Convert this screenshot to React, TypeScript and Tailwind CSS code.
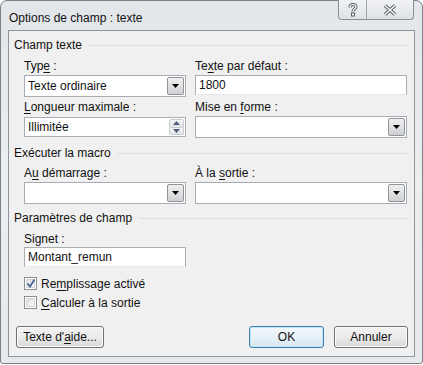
import React from "react"

const font = { fontFamily: '"Liberation Sans", Arial, sans-serif' }

function Key({ children }: { children: React.ReactNode }) {
  return <span className="underline underline-offset-[2px] decoration-[1px]">{children}</span>
}

function GroupHeader({ label, className = "" }: { label: string; className?: string }) {
  return (
    <div className={`flex items-center h-[14px] ${className}`}>
      <span className="whitespace-nowrap">{label}</span>
      <div className="flex-1 ml-[7px] border-t border-[#d5dfe5]" />
    </div>
  )
}

function Arrow() {
  return (
    <svg width="7" height="4" viewBox="0 0 7 4">
      <path d="M0 0H7L3.5 4Z" fill="#000" />
    </svg>
  )
}

function Select({ value = "" }: { value?: string }) {
  return (
    <div className="flex h-[22px] border border-[#a5acb5] bg-white">
      <div className="flex-1 flex items-center pl-[3px] truncate">{value}</div>
      <div className="w-[17px] m-[1px] ml-0 border border-[#8f949a] rounded-[2px] bg-gradient-to-b from-[#f0f0f0] to-[#cfd0d2] flex items-center justify-center">
        <Arrow />
      </div>
    </div>
  )
}

function TextInput({ value = "" }: { value?: string }) {
  return (
    <div className="h-[20px] border border-[#abadb3] border-b-[#e3e9ef] bg-white flex items-center pl-[3px]">
      {value}
    </div>
  )
}

function Spin({ value }: { value: string }) {
  return (
    <div className="flex h-[20px] border border-[#abadb3] bg-white">
      <div className="flex-1 flex items-center pl-[3px]">{value}</div>
      <div className="w-[15px] flex flex-col my-[1px] mr-[1px]">
        <div className="flex-1 border border-[#c8ccd2] rounded-t-[2px] bg-gradient-to-b from-[#f4f4f4] to-[#e3e4e6] flex items-center justify-center">
          <svg width="7" height="4" viewBox="0 0 7 4">
            <path d="M3.5 0L7 4H0Z" fill="#4c607a" />
          </svg>
        </div>
        <div className="flex-1 border border-t-0 border-[#c8ccd2] rounded-b-[2px] bg-gradient-to-b from-[#f4f4f4] to-[#e3e4e6] flex items-center justify-center">
          <svg width="7" height="4" viewBox="0 0 7 4">
            <path d="M0 0H7L3.5 4Z" fill="#4c607a" />
          </svg>
        </div>
      </div>
    </div>
  )
}

function Checkbox({ checked, children, className = "" }: { checked?: boolean; children: React.ReactNode; className?: string }) {
  return (
    <div className={`flex items-center h-[13px] ${className}`}>
      <div className="w-[13px] h-[13px] border border-[#8e8f8f] bg-white p-[1px]">
        <div className="w-full h-full border border-[#d4d6d9] bg-gradient-to-br from-[#dcdcdc] to-[#fbfbfb] relative">
          {checked && (
            <svg className="absolute -left-[1px] -top-[2px]" width="10" height="11" viewBox="0 0 10 11">
              <path d="M1.5 5.5L4 8.5L8.5 1.5" fill="none" stroke="#4a5f97" strokeWidth="1.8" />
            </svg>
          )}
        </div>
      </div>
      <span className="ml-[4px]">{children}</span>
    </div>
  )
}

function Button({ children, width, primary }: { children: React.ReactNode; width: string; primary?: boolean }) {
  return (
    <div
      className={`${width} h-[22px] rounded-[3px] border flex items-center justify-center ${
        primary
          ? "border-[#3c7fb1] bg-gradient-to-b from-[#f3f8fb] via-[#e8f1f7] to-[#d6e6f1] shadow-[inset_0_0_0_1px_#bfe3f7]"
          : "border-[#707070] bg-gradient-to-b from-[#f2f2f2] via-[#ebebeb] to-[#d8d8d8] shadow-[inset_0_0_0_1px_#fcfcfc]"
      }`}
    >
      {children}
    </div>
  )
}

export default function App() {
  return (
    <div className="w-[423px] h-[365px] bg-white text-[12px] text-[#111]" style={font}>
      <div className="w-[423px] h-[364px] rounded-t-[7px] rounded-b-[3px] border border-[#7a7f86] bg-gradient-to-b from-[#e2e6ea] via-[#eceef0] to-[#e6e9ec] flex flex-col">
        {/* title bar */}
        <div className="h-[29px] flex items-start">
          <div className="pl-[8px] pt-[10px] text-[12px] leading-[14px]">Options de champ : texte</div>
          <div className="flex-1" />
          <div className="flex h-[20px] mt-[-1px] mr-[8px] border border-t-0 border-[#8b9096] rounded-b-[4px] bg-gradient-to-b from-[#f1f2f4] to-[#dfe2e6]">
            <div className="w-[28px] flex items-center justify-center border-r border-[#9ea3a8]">
              <svg width="10" height="14" viewBox="0 0 10 14">
                <path d="M2 4.5C2 2.5 3.5 1.5 5 1.5C6.8 1.5 8 2.6 8 4C8 6 5 6 5 8.5" fill="none" stroke="#5a5f66" strokeWidth="3" />
                <path d="M2 4.5C2 2.5 3.5 1.5 5 1.5C6.8 1.5 8 2.6 8 4C8 6 5 6 5 8.5" fill="none" stroke="#fff" strokeWidth="1.2" />
                <rect x="3.5" y="10" width="3" height="3" fill="#fff" stroke="#5a5f66" strokeWidth="1" />
              </svg>
            </div>
            <div className="w-[46px] flex items-center justify-center">
              <svg width="14" height="12" viewBox="0 0 14 12">
                <path d="M2 1.5L12 10.5M12 1.5L2 10.5" stroke="#5a5f66" strokeWidth="3.6" />
                <path d="M2 1.5L12 10.5M12 1.5L2 10.5" stroke="#fff" strokeWidth="1.4" />
              </svg>
            </div>
          </div>
        </div>

        {/* client area */}
        <div className="ml-[7px] w-[407px] h-[327px] border border-[#8d949b] bg-[#f0f0f0] px-[5px] flex flex-col leading-[14px]">
          <GroupHeader label="Champ texte" className="mt-[7px]" />

          <div className="grid grid-cols-[162px_212px] gap-x-[9px] pl-[10px]">
            <div className="mt-[7px]">
              <div className="h-[14px]">
                Typ<Key>e</Key> :
              </div>
              <div className="mt-[2px]">
                <Select value="Texte ordinaire" />
              </div>
            </div>
            <div className="mt-[7px]">
              <div className="h-[14px]">
                Te<Key>x</Key>te par défaut :
              </div>
              <div className="mt-[2px]">
                <TextInput value="1800" />
              </div>
            </div>
            <div className="mt-[3px]">
              <div className="h-[14px]">
                <Key>L</Key>ongueur maximale :
              </div>
              <div className="mt-[3px]">
                <Spin value="Illimitée" />
              </div>
            </div>
            <div className="mt-[3px]">
              <div className="h-[14px]">
                Mise en <Key>f</Key>orme :
              </div>
              <div className="mt-[2px]">
                <Select />
              </div>
            </div>
          </div>

          <GroupHeader label="Exécuter la macro" className="mt-[8px]" />

          <div className="grid grid-cols-[162px_212px] gap-x-[9px] pl-[10px]">
            <div className="mt-[6px]">
              <div className="h-[14px]">
                A<Key>u</Key> démarrage :
              </div>
              <div className="mt-[2px]">
                <Select />
              </div>
            </div>
            <div className="mt-[6px]">
              <div className="h-[14px]">
                À la <Key>s</Key>ortie :
              </div>
              <div className="mt-[2px]">
                <Select />
              </div>
            </div>
          </div>

          <GroupHeader label="Paramètres de champ" className="mt-[7px]" />

          <div className="pl-[10px]">
            <div className="w-[162px] mt-[7px]">
              <div className="h-[14px]">Signet :</div>
              <div className="mt-[1px]">
                <TextInput value="Montant_remun" />
              </div>
            </div>
            <Checkbox checked className="mt-[10px]">
              Re<Key>m</Key>plissage activé
            </Checkbox>
            <Checkbox className="mt-[6px]">
              <Key>C</Key>alculer à la sortie
            </Checkbox>
          </div>

          <div className="flex mt-[17px] pl-[2px]">
            <Button width="w-[88px]">
              Texte d'<Key>a</Key>ide...
            </Button>
            <div className="flex-1" />
            <Button width="w-[75px]" primary>
              OK
            </Button>
            <div className="w-[10px]" />
            <Button width="w-[74px]">Annuler</Button>
            <div className="w-[1px]" />
          </div>
        </div>
      </div>
    </div>
  )
}
